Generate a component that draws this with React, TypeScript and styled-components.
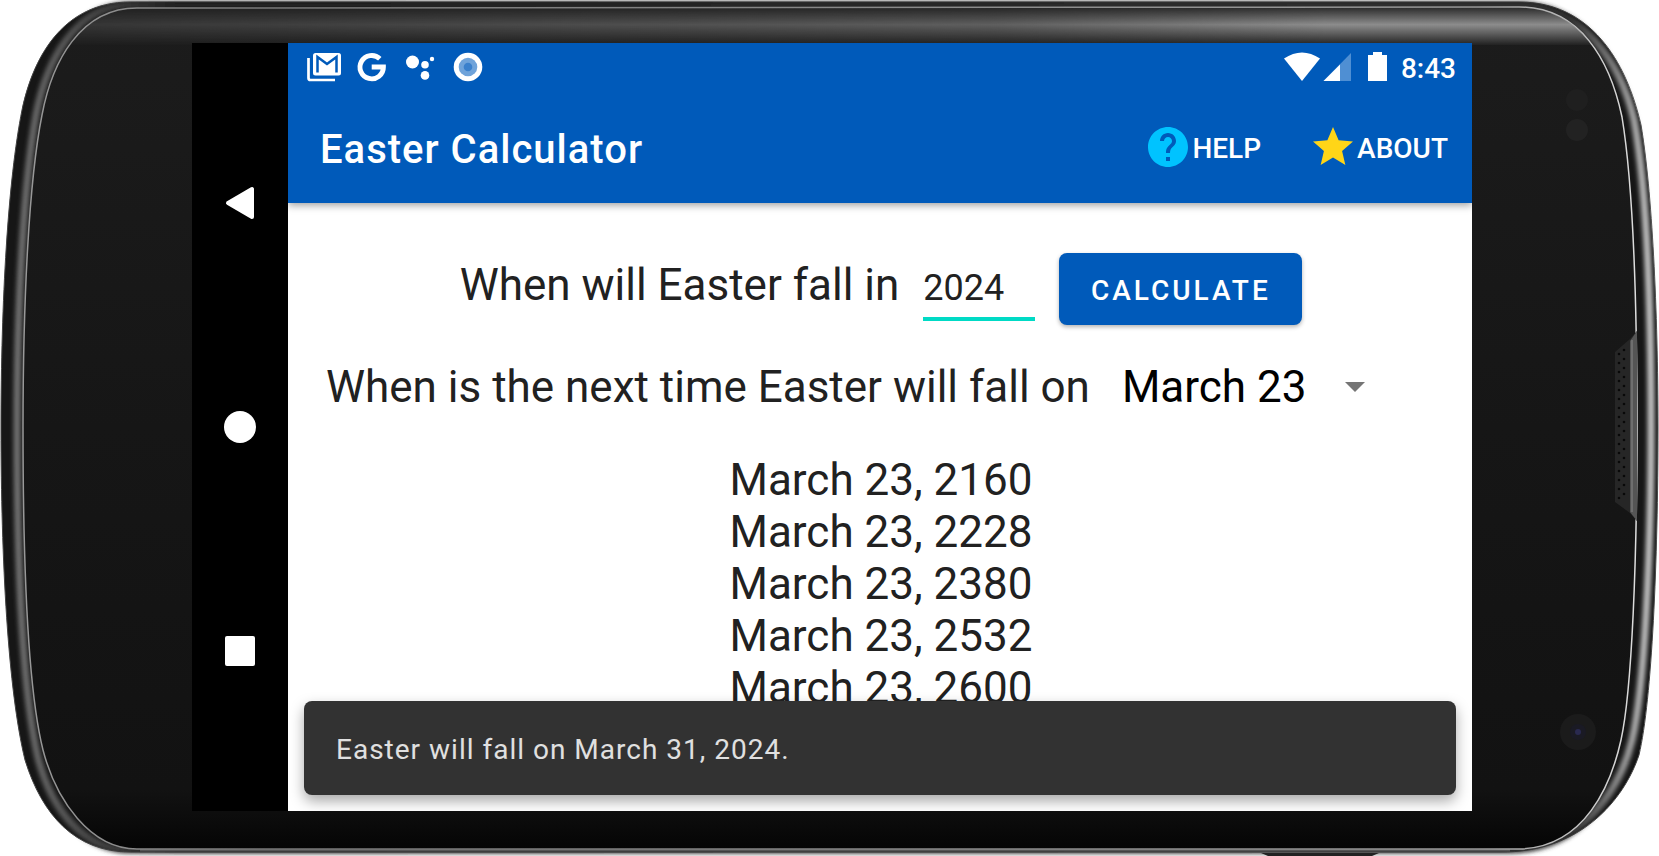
import React, { useState } from "react";
import styled, { createGlobalStyle } from "styled-components";

const GlobalStyle = createGlobalStyle`
  * { box-sizing: border-box; }
  body { margin: 0; background: #fff; font-family: Roboto, "Noto Sans", sans-serif; }
  button, input, select { font-family: inherit; }
`;

const Device = styled.div`
  position: relative;
  display: flex;
  min-height: 100vh;
  padding: 43px 187px 45px 192px;
`;

const DeviceArt = styled.svg`
  position: absolute;
  inset: 0;
  width: 100%;
  height: 100%;
`;

const Screen = styled.div`
  position: relative;
  flex: 1;
  display: flex;
  min-width: 0;
`;

const NavBar = styled.nav`
  flex: none;
  width: 96px;
  display: flex;
  flex-direction: column;
  align-items: center;
  justify-content: space-between;
  padding: 112px 0;
  background: #000;
`;

const NavButton = styled.button`
  display: flex;
  align-items: center;
  justify-content: center;
  width: 96px;
  height: 96px;
  padding: 0;
  border: 0;
  background: none;
`;

const AppWindow = styled.div`
  position: relative;
  flex: 1;
  min-width: 0;
  display: flex;
  flex-direction: column;
  overflow: hidden;
  background: #fff;
`;

const Header = styled.header`
  height: 160px;
  flex: none;
  background: #005aba;
  color: #fff;
  box-shadow: 0 2px 8px rgba(0, 0, 0, 0.4);
`;

const StatusBar = styled.div`
  display: flex;
  align-items: center;
  justify-content: space-between;
  height: 48px;
  padding: 0 16px 0 18px;
`;

const StatusGroup = styled.div`
  display: flex;
  align-items: center;
`;

const Clock = styled.time`
  margin-left: 13px;
  padding-top: 4px;
  font-size: 28px;
  font-weight: 500;
  line-height: 32px;
`;

const Toolbar = styled.div`
  display: flex;
  align-items: center;
  justify-content: space-between;
  height: 112px;
  padding: 0 24px 0 32px;
`;

const Title = styled.h1`
  margin: 0;
  padding-top: 6px;
  font-size: 40px;
  line-height: 48px;
  font-weight: 500;
  letter-spacing: 1px;
`;

const Actions = styled.div`
  display: flex;
  gap: 48px;
`;

const Action = styled.button`
  display: flex;
  align-items: center;
  padding: 0;
  border: 0;
  background: none;
  color: #fff;
  font-size: 28px;
  line-height: 32px;
  font-weight: 500;
`;

const ActionLabel = styled.span`
  padding-top: 4px;
`;

const Content = styled.main`
  flex: 1 0 0;
  min-height: 0;
  overflow: hidden;
  color: #212121;
  font-size: 44px;
  line-height: 52px;
`;

const YearForm = styled.form`
  display: flex;
  justify-content: center;
  padding: 50px 0 0 2px;
`;

const YearPrompt = styled.label`
  white-space: nowrap;
  padding-top: 6px;
`;

const DatePrompt = styled.label`
  white-space: nowrap;
`;

const YearInput = styled.input`
  width: 112px;
  height: 68px;
  margin: 0 24px;
  padding: 6px 0 0;
  border: 0;
  border-bottom: 4px solid #00dac5;
  outline: 0;
  background: none;
  color: #212121;
  font-size: 36px;
`;

const CalculateButton = styled.button`
  width: 243px;
  height: 72px;
  padding: 2px 0 0;
  border: 0;
  border-radius: 8px;
  background: #005aba;
  color: #fff;
  font-size: 28px;
  font-weight: 500;
  letter-spacing: 3px;
  box-shadow: 0 2px 4px rgba(0, 0, 0, 0.3);
`;

const DateRow = styled.div`
  display: flex;
  align-items: center;
  padding: 36px 0 0 38px;
`;

const SelectWrap = styled.div`
  display: flex;
  align-items: center;
  margin-left: 32px;
`;

const DateSelect = styled.select`
  appearance: none;
  width: 223px;
  padding: 0;
  border: 0;
  background: none;
  color: #000;
  font-size: 44px;
  line-height: 52px;
`;

const Results = styled.ul`
  margin: 0;
  padding: 41px 0 0 2px;
  list-style: none;
  text-align: center;
`;

const Snackbar = styled.div`
  position: absolute;
  left: 16px;
  right: 16px;
  bottom: 16px;
  padding: 33px 32px 29px;
  border-radius: 8px;
  background: #323232;
  color: #e0e0e0;
  font-size: 28px;
  line-height: 32px;
  letter-spacing: 1px;
  box-shadow: 0 6px 14px rgba(0, 0, 0, 0.35);
`;

const OUTER =
  "M130 2C60 2 32 62 22 110C8 180 1 300 1 428C1 560 8 690 25 760C42 815 75 852 130 852H1500C1580 853 1624 800 1639 755C1652 700 1658 560 1658 428C1658 310 1652 190 1641 125C1626 60 1590 2 1519 2Z";
const MIDDLE =
  "M130 5C75 5 46 62 36 115C24 180 17 300 17 428C17 560 22 690 38 758C52 812 85 850 130 850H1510C1580 850 1620 790 1632 740C1644 690 1651 560 1651 428C1651 310 1647 190 1634 120C1620 60 1580 5 1519 5Z";
const INNER =
  "M137 8C80 8 52 62 42 115C29 180 23 300 23 428C23 560 28 690 43 750C56 800 90 849 137 849H1520C1585 847 1611 785 1621 740C1632 690 1637 560 1637 428C1637 310 1634 190 1622 117C1610 60 1580 7 1519 7Z";

function PhoneBody() {
  const dots = Array.from({ length: 17 }, (_, i) => 350 + i * 9);
  return (
    <DeviceArt viewBox="0 0 1659 856" preserveAspectRatio="none" aria-hidden="true">
      <defs>
        <linearGradient id="face" x1="0" y1="0" x2="0" y2="1">
          <stop offset="0" stopColor="#1c1c1c" />
          <stop offset="0.5" stopColor="#161616" />
          <stop offset="0.93" stopColor="#121212" />
          <stop offset="1" stopColor="#050505" />
        </linearGradient>
        <linearGradient id="glare" x1="0" y1="0" x2="0" y2="1">
          <stop offset="0" stopColor="#999" stopOpacity="0.15" />
          <stop offset="0.45" stopColor="#999" stopOpacity="0.9" />
          <stop offset="1" stopColor="#999" stopOpacity="0.05" />
        </linearGradient>
        <linearGradient id="fade">
          <stop offset="0" stopColor="#fff" stopOpacity="0.2" />
          <stop offset="0.3" stopColor="#fff" stopOpacity="0.4" />
          <stop offset="0.6" stopColor="#fff" stopOpacity="0.6" />
          <stop offset="0.8" stopColor="#fff" />
          <stop offset="1" stopColor="#fff" />
        </linearGradient>
        <linearGradient id="shine">
          <stop offset="0" stopColor="#707070" />
          <stop offset="0.05" stopColor="#444" />
          <stop offset="0.1" stopColor="#222" />
          <stop offset="0.95" stopColor="#333" />
          <stop offset="1" stopColor="#c4c4c4" />
        </linearGradient>
        <linearGradient id="edge">
          <stop offset="0" stopColor="#999" />
          <stop offset="0.15" stopColor="#777" />
          <stop offset="0.9" stopColor="#999" />
          <stop offset="1" stopColor="#ddd" />
        </linearGradient>
        <mask id="glareMask"><rect width="1659" height="60" fill="url(#fade)" /></mask>
        <clipPath id="inside"><path d={INNER} /></clipPath>
        <filter id="soft"><feGaussianBlur stdDeviation="2" /></filter>
      </defs>
      <path d={OUTER} fill="#161616" stroke="#444" strokeWidth="1" />
      <path d={MIDDLE} fill="none" stroke="url(#shine)" strokeWidth="7" filter="url(#soft)" />
      <path d="M140 850H1510" stroke="#555" strokeWidth="3" />
      <path d={INNER} fill="url(#face)" stroke="url(#edge)" strokeWidth="1.5" />
      <g clipPath="url(#inside)">
        <rect y="8" width="1659" height="37" fill="url(#glare)" mask="url(#glareMask)" />
      </g>
      <path d="M1637 331L1630 339L1615 352V502L1630 513L1637 521Z" fill="#262626" />
      <path d="M1637 331L1630 341V512L1637 521Z" fill="#555" />
      <path d="M1632 340V512" stroke="#888" />
      {dots.map((y) => (
        <g key={y} fill="#080808">
          <circle cx="1619" cy={y + 4} r="1.3" />
          <circle cx="1624" cy={y} r="1.3" />
        </g>
      ))}
      <circle cx="1577" cy="100" r="11" fill="#1f1f1f" />
      <circle cx="1577" cy="130" r="11" fill="#222" />
      <circle cx="1578" cy="732" r="18" fill="#1b1b1b" />
      <circle cx="1578" cy="732" r="8" fill="#1a1a24" />
      <circle cx="1578" cy="732" r="3" fill="#292950" />
      <path d="M1261 853H1379L1372 856H1268Z" fill="#222" />
    </DeviceArt>
  );
}

const NotificationIcons = () => (
  <svg width="180" height="32" viewBox="0 0 180 32" aria-hidden="true">
    <path d="M2.500 7V27Q2.500 29 4.500 29H29" fill="none" stroke="#fff" strokeWidth="2.700" />
    <rect x="7" y="2" width="28" height="22.500" rx="2.500" fill="#fff" />
    <path d="M11.500 21.500V6L21 13L30.500 6V21.500" fill="none" stroke="#005aba" strokeWidth="2.500" />
    <path d="M73.800 7.700A11.700 11.700 0 1 0 77.400 16H65.700" fill="none" stroke="#fff" strokeWidth="4.900" />
    <g fill="#fff">
      <circle cx="106.500" cy="11" r="6.500" />
      <circle cx="119" cy="13.700" r="3.800" />
      <circle cx="119" cy="24.400" r="4.300" />
      <circle cx="126" cy="8" r="2.200" />
      <circle cx="162" cy="16" r="14.300" />
    </g>
    <circle cx="162" cy="16" r="9.300" fill="#6fa3da" />
    <circle cx="162" cy="16" r="4.300" fill="#3a80cc" />
  </svg>
);

const SystemIcons = () => (
  <svg width="104" height="32" viewBox="0 0 104 32" aria-hidden="true">
    <path d="M0 7.500Q18 -4.500 36 7.500L18 30Z" fill="#fff" />
    <path d="M67 2V30H39.500Z" fill="#4f8fd3" />
    <path d="M56 13.500V30H39.500Z" fill="#fff" />
    <path d="M84 4H89V1H98V4H103V30H84Z" fill="#fff" />
  </svg>
);

const HelpIcon = () => (
  <svg width="48" height="48" viewBox="0 0 24 24" aria-hidden="true">
    <path fill="#00c3ff" d="M12 2C6.480 2 2 6.480 2 12s4.480 10 10 10 10-4.480 10-10S17.520 2 12 2zm1 17h-2v-2h2v2zm2.070-7.750l-.9.920C13.450 12.900 13 13.500 13 15h-2v-.5c0-1.100.450-2.100 1.170-2.830l1.240-1.260c.370-.360.590-.860.590-1.410 0-1.100-.900-2-2-2s-2 .900-2 2H8c0-2.210 1.790-4 4-4s4 1.790 4 4c0 .880-.360 1.680-.930 2.250z" />
  </svg>
);

const StarIcon = () => (
  <svg width="48" height="48" viewBox="0 0 24 24" aria-hidden="true">
    <path fill="#ffd517" d="M12 17.270L18.180 21L16.540 13.970L22 9.240L14.810 8.630L12 2L9.190 8.630L2 9.240L7.460 13.970L5.820 21Z" />
  </svg>
);

const YEARS = [2160, 2228, 2380, 2532, 2600];

export default function App() {
  const [year, setYear] = useState("2024");
  return (
    <>
      <GlobalStyle />
      <Device>
        <PhoneBody />
        <Screen>
          <NavBar aria-label="System navigation">
            <NavButton aria-label="Back">
              <svg width="32" height="36" viewBox="0 0 32 36">
                <path d="M4 18L28 4V32Z" fill="#fff" stroke="#fff" strokeWidth="4" strokeLinejoin="round" />
              </svg>
            </NavButton>
            <NavButton aria-label="Home">
              <svg width="32" height="32" viewBox="0 0 32 32"><circle cx="16" cy="16" r="16" fill="#fff" /></svg>
            </NavButton>
            <NavButton aria-label="Overview">
              <svg width="30" height="30" viewBox="0 0 30 30"><rect width="30" height="30" rx="2" fill="#fff" /></svg>
            </NavButton>
          </NavBar>
          <AppWindow>
            <Header>
              <StatusBar>
                <StatusGroup><NotificationIcons /></StatusGroup>
                <StatusGroup><SystemIcons /><Clock>8:43</Clock></StatusGroup>
              </StatusBar>
              <Toolbar>
                <Title>Easter Calculator</Title>
                <Actions>
                  <Action type="button"><HelpIcon /><ActionLabel>HELP</ActionLabel></Action>
                  <Action type="button"><StarIcon /><ActionLabel>ABOUT</ActionLabel></Action>
                </Actions>
              </Toolbar>
            </Header>
            <Content>
              <YearForm onSubmit={(e) => e.preventDefault()}>
                <YearPrompt htmlFor="year">When will Easter fall in</YearPrompt>
                <YearInput id="year" value={year} onChange={(e) => setYear(e.target.value)} />
                <CalculateButton type="submit">CALCULATE</CalculateButton>
              </YearForm>
              <DateRow>
                <DatePrompt htmlFor="date">When is the next time Easter will fall on</DatePrompt>
                <SelectWrap>
                  <DateSelect id="date"><option>March 23</option></DateSelect>
                  <svg width="20" height="10" viewBox="0 0 20 10" aria-hidden="true"><path d="M0 0H20L10 10Z" fill="#757575" /></svg>
                </SelectWrap>
              </DateRow>
              <Results>
                {YEARS.map((y) => <li key={y}>March 23, {y}</li>)}
              </Results>
            </Content>
            <Snackbar role="status">Easter will fall on March 31, 2024.</Snackbar>
          </AppWindow>
        </Screen>
      </Device>
    </>
  );
}
